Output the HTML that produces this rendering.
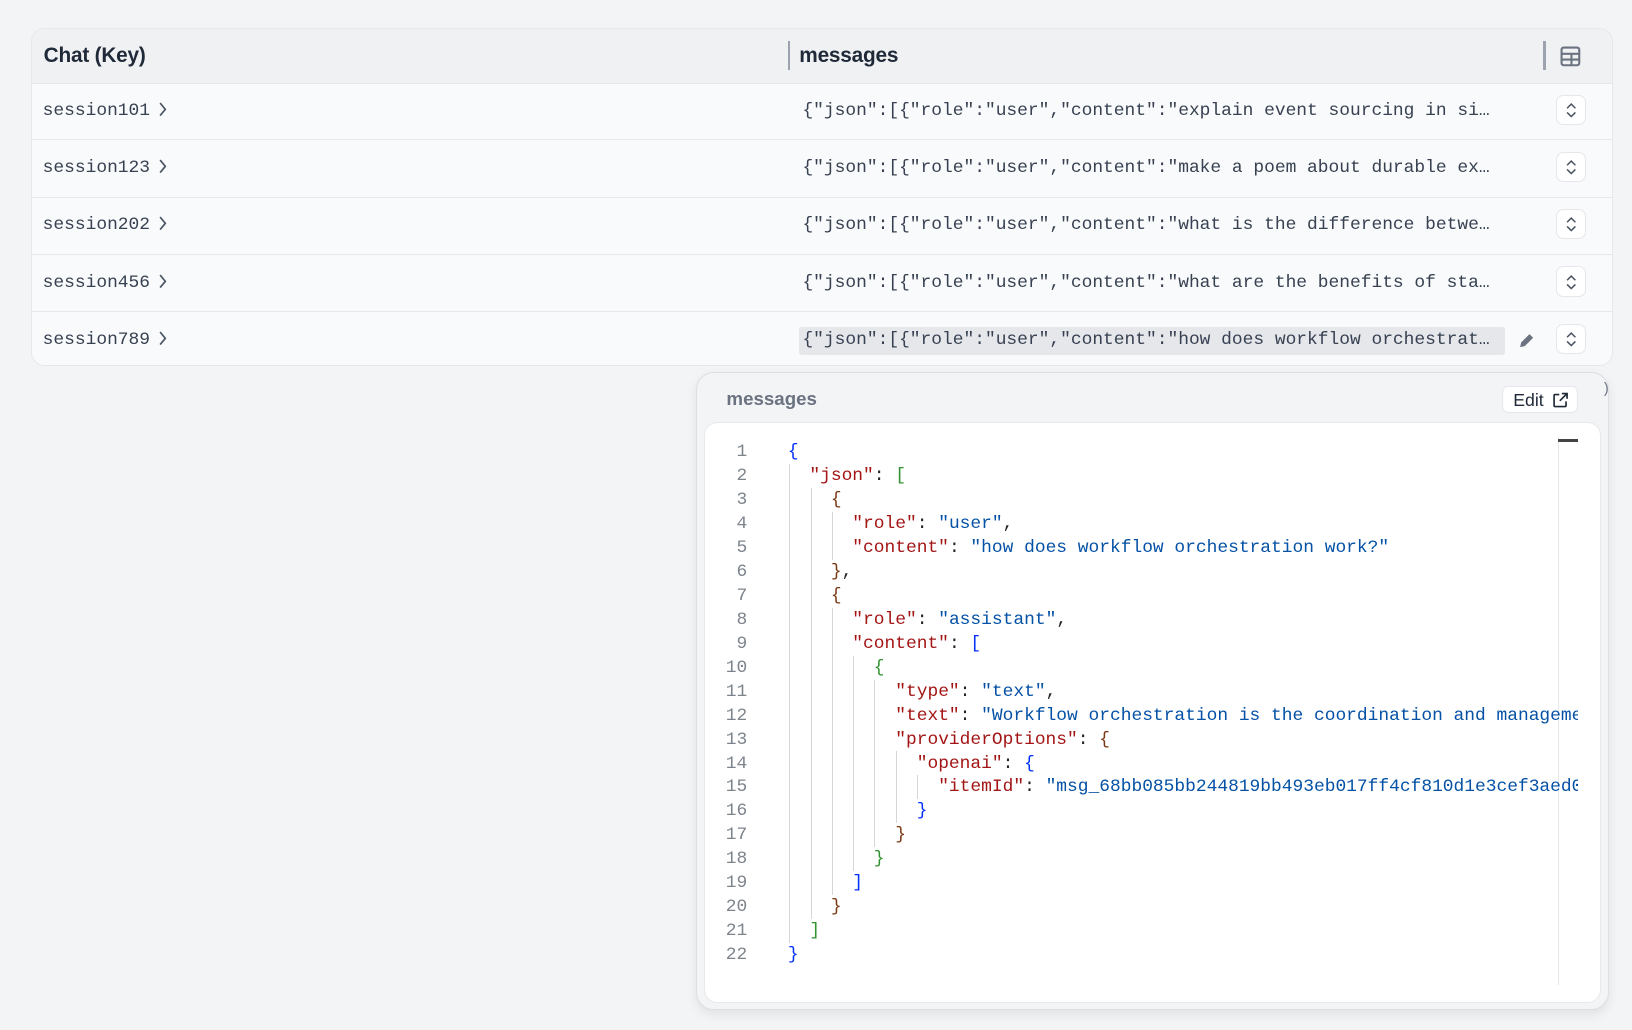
<!DOCTYPE html>
<html><head><meta charset="utf-8"><style>
*{box-sizing:border-box;margin:0;padding:0}
html,body{width:1632px;height:1030px;overflow:hidden;background:#f3f4f6}
#w{zoom:1.0408;position:relative;width:1568px;height:990px;font-family:"Liberation Sans",sans-serif}
.abs{position:absolute}
.mono{font-family:"Liberation Mono","DejaVu Sans Mono",monospace;font-size:17.2px}
.card{left:30px;top:27px;width:1520px;height:325px;border:1px solid #e5e7eb;border-radius:13px;background:#f9fafb;overflow:hidden}
.hdr{left:0;top:0;width:100%;height:53px;background:#f0f1f3;border-bottom:1px solid #e5e7eb}
.ht{font-size:20px;color:#1f2937;top:14px;font-weight:bold;letter-spacing:-0.2px}
.key{left:11px;top:17px;color:#374151}
.val{left:741px;top:17px;color:#374151;width:665px;white-space:nowrap;overflow:hidden;text-overflow:ellipsis}
.btn{left:1465px;top:11px;width:29px;height:29px;background:#fff;border:1px solid #e5e7eb;border-radius:7px}
.pop{left:669px;top:357px;width:877px;height:613px;background:#f3f4f6;border:1px solid #dcdfe3;border-radius:17px;box-shadow:0 4px 10px rgba(0,0,0,.08)}
.ed{left:676px;top:405px;width:862px;height:559px;background:#fff;border:1px solid #e8e9ec;border-radius:13px}
.ln{left:690px;width:28px;text-align:right;color:#7d848c}
.cl{left:757px;white-space:pre;width:759px;overflow:hidden}
.k{color:#a31515}.s{color:#0451a5}.b1{color:#0431fa}.b2{color:#319331}.b3{color:#7b3814}.p{color:#222}
.g{width:1px;background:#d6d6d6}
</style></head><body><div id="w">
<div class="abs card">
 <div class="abs hdr">
  <div class="abs ht" style="left:11px">Chat (Key)</div>
  <div class="abs" style="left:726px;top:11px;width:2px;height:28px;background:#9ca3af"></div>
  <div class="abs ht" style="left:737px">messages</div>
  <div class="abs" style="left:1452px;top:11px;width:2px;height:28px;background:#9ca3af"></div>
  <svg class="abs" style="left:1468px;top:16px" width="20" height="20" viewBox="0 0 20 20" fill="none" stroke="#6b7280" stroke-width="2"><rect x="1.5" y="1.5" width="17" height="17" rx="2"/><path d="M1.5 7.5h17M1.5 13h17M11 7.5v11"/></svg>
 </div>
</div>
<div id="rows"></div>
<div class="abs pop">
 <div class="abs" style="left:28px;top:15px;font-size:18px;color:#6b7280;font-weight:bold">messages</div>
 <div class="abs" style="left:773px;top:13px;width:73px;height:26px;background:#fff;border:1px solid #e5e7eb;border-radius:6px;font-size:17px;color:#1f2937;padding:3px 0 0 10px">Edit
  <svg class="abs" style="left:47px;top:5px" width="16" height="16" viewBox="0 0 16 16" fill="none" stroke="#1f2937" stroke-width="1.6"><path d="M7 2.5H3a1 1 0 0 0-1 1V13a1 1 0 0 0 1 1h9.5a1 1 0 0 0 1-1V9M9.5 1.5H14.5V6.5M14.5 1.5L7.5 8.5"/></svg></div>
</div>
<div class="abs" style="left:1541px;top:366px;font-size:14px;color:#6b7280">)</div>
<div class="abs ed"></div>
<div class="abs" style="left:1497px;top:420px;width:1px;height:526px;background:#e5e7eb"></div>
<div class="abs" style="left:1497px;top:422px;width:19px;height:3px;background:#444"></div>
<div id="code"></div>
</div>
<script>
var rows=[["session101","explain event sourcing in simple terms"],["session123","make a poem about durable execution"],["session202","what is the difference between"],["session456","what are the benefits of stateful"],["session789","how does workflow orchestration work?"]];
var h='';
rows.forEach(function(r,i){
 var top=27+53+i*55;
 var last=i==4;
 h+='<div class="abs" style="left:30px;top:'+top+'px;width:1520px;height:55px;'+(last?'':'border-bottom:1px solid #e5e7eb')+'">';
 h+='<div class="abs mono key">'+r[0]+'</div>';
 h+='<svg class="abs" style="left:121px;top:17px" width="10" height="16" viewBox="0 0 10 16" fill="none" stroke="#4b5563" stroke-width="1.6"><path d="M3 2l5 6-5 6"/></svg>';
 if(last)h+='<div class="abs" style="left:738px;top:14px;width:678px;height:27px;background:#e5e7eb;border-radius:3px"></div>';
 h+='<div class="abs mono val">{"json":[{"role":"user","content":"'+r[1]+'"}]}</div>';
 if(last)h+='<svg class="abs" style="left:1428px;top:18px" width="18" height="18" viewBox="0 0 18 18"><path d="M3 15.5l1-4.5 8-8 3.5 3.5-8 8z" fill="#6b7280"/></svg>';
 h+='<div class="abs btn"><svg class="abs" style="left:8px;top:6px" width="12" height="16" viewBox="0 0 12 16" fill="none" stroke="#4b5563" stroke-width="1.5"><path d="M2 6l4-4 4 4M2 10l4 4 4-4"/></svg></div>';
 h+='</div>';
});
document.getElementById('rows').innerHTML=h;
var L=[
'<span class="b1">{</span>',
'  <span class="k">"json"</span><span class="p">: </span><span class="b2">[</span>',
'    <span class="b3">{</span>',
'      <span class="k">"role"</span><span class="p">: </span><span class="s">"user"</span><span class="p">,</span>',
'      <span class="k">"content"</span><span class="p">: </span><span class="s">"how does workflow orchestration work?"</span>',
'    <span class="b3">}</span><span class="p">,</span>',
'    <span class="b3">{</span>',
'      <span class="k">"role"</span><span class="p">: </span><span class="s">"assistant"</span><span class="p">,</span>',
'      <span class="k">"content"</span><span class="p">: </span><span class="b1">[</span>',
'        <span class="b2">{</span>',
'          <span class="k">"type"</span><span class="p">: </span><span class="s">"text"</span><span class="p">,</span>',
'          <span class="k">"text"</span><span class="p">: </span><span class="s">"Workflow orchestration is the coordination and management of tasks"</span>',
'          <span class="k">"providerOptions"</span><span class="p">: </span><span class="b3">{</span>',
'            <span class="k">"openai"</span><span class="p">: </span><span class="b1">{</span>',
'              <span class="k">"itemId"</span><span class="p">: </span><span class="s">"msg_68bb085bb244819bb493eb017ff4cf810d1e3cef3aed0"</span>',
'            <span class="b1">}</span>',
'          <span class="b3">}</span>',
'        <span class="b2">}</span>',
'      <span class="b1">]</span>',
'    <span class="b3">}</span>',
'  <span class="b2">]</span>',
'<span class="b1">}</span>'];
var c='';
L.forEach(function(l,i){var t=421+i*23;
 c+='<div class="abs mono ln" style="top:'+(t+4)+'px">'+(i+1)+'</div>';
 c+='<div class="abs mono cl" style="top:'+(t+4)+'px">'+l+'</div>';});
var G=[[758,2,21],[779,3,20],[799,4,5],[799,8,19],[820,10,18],[840,11,17],[861,14,16],[881,15,15]];
G.forEach(function(g){c+='<div class="abs g" style="left:'+g[0]+'px;top:'+(423+(g[1]-1)*23)+'px;height:'+((g[2]-g[1]+1)*23)+'px"></div>';});
document.getElementById('code').innerHTML=c;
</script>
</body></html>
